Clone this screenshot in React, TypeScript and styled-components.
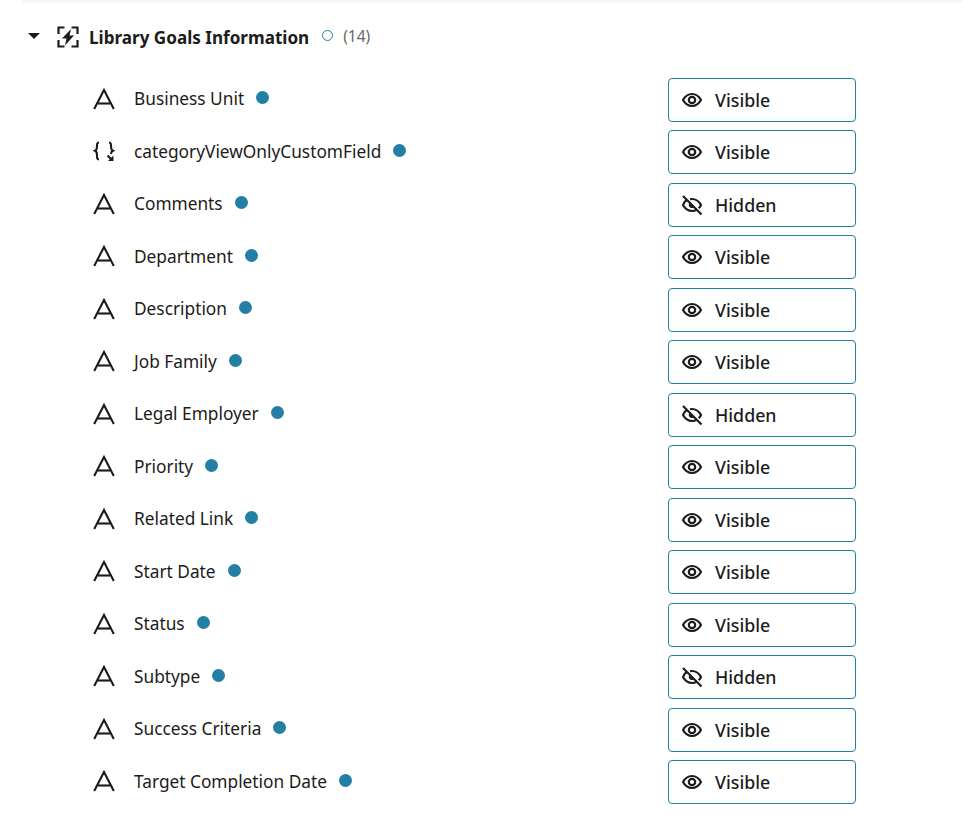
import React from 'react';
import styled, { createGlobalStyle } from 'styled-components';

const GlobalStyle = createGlobalStyle`
    html, body {
        margin: 0;
        padding: 0;
        background: #fff;
        font-family: "Noto Sans", "Liberation Sans", sans-serif;
        color: #1d1b19;
    }
`;

const Page = styled.div`
    width: 962px;
    height: 816px;
    overflow: hidden;
`;

const TopShade = styled.div`
    height: 3px;
    margin-left: 22px;
    background: linear-gradient(#f3f3f3, #fafafa);
`;

const Header = styled.div`
    display: flex;
    align-items: center;
    height: 66px;
    padding-left: 28px;
`;

const Caret = styled.span`
    width: 0;
    height: 0;
    margin: 0 17px 0 0;
    border-left: 6px solid transparent;
    border-right: 6px solid transparent;
    border-top: 6px solid #1d1b19;
`;

const GroupGlyph = styled.svg`
    margin-top: 2px;
`;

const Title = styled.h2`
    margin: 3px 0 0 10px;
    font-size: 17.1px;
    font-weight: 700;
    line-height: 24px;
`;

const Ring = styled.span`
    width: 11px;
    height: 11px;
    margin: -1px 0 0 13px;
    box-sizing: border-box;
    border: 1.5px solid #237fa3;
    border-radius: 50%;
`;

const Count = styled.span`
    margin: -1px 0 0 10px;
    font-size: 15.5px;
    color: #6b6560;
`;

const Rows = styled.ul`
    list-style: none;
    margin: 4.7px 0 0;
    padding: 0 0 0 92px;
`;

const Row = styled.li`
    display: flex;
    align-items: center;
    width: 764px;
    height: 52.5px;
`;

const TypeIcon = styled.span`
    display: flex;
    justify-content: center;
    width: 24px;
    margin: -2px 18px 0 0;
`;

const Label = styled.span`
    margin-top: -1px;
    font-size: 17.3px;
    line-height: 24px;
    white-space: nowrap;
`;

const Dot = styled.span`
    width: 13px;
    height: 13px;
    margin: -4px 0 0 12px;
    border-radius: 50%;
    background: #237fa3;
`;

const VisibilityButton = styled.button`
    display: flex;
    align-items: center;
    gap: 12px;
    width: 188px;
    height: 44px;
    margin-left: auto;
    padding: 0 0 0 12px;
    box-sizing: border-box;
    background: #fff;
    border: 1px solid #237fa3;
    border-radius: 4px;
    font-family: inherit;
    font-size: 17.8px;
    font-weight: 500;
    color: #1d1b19;
`;

const ButtonIcon = styled.span`
    display: flex;
    justify-content: center;
    width: 22px;
`;

const TextIcon = () => (
    <svg width="22" height="22" viewBox="0 0 22 22" fill="none" stroke="#1d1b19" strokeWidth="2.1">
        <path d="M1.200 21 L11 2 L20.800 21" />
        <path d="M5 15.500 H17" />
    </svg>
);

const FormulaIcon = () => (
    <svg width="22" height="22" viewBox="0 0 22 22" fill="none" stroke="#1d1b19" strokeWidth="2.1">
        <path d="M6 2.500 C3.800 2.500 4 4.500 4 6.500 C4 9 3.800 10 2 10.800 C3.800 11.600 4 12.600 4 15 C4 17.500 3.800 19.500 6 19.500" />
        <path d="M16 2.500 C18.200 2.500 18 4.500 18 6.500 C18 9 18.200 10 20 10.800 C18.200 11.600 18 12.600 18 14" />
        <path d="M14.500 15.500 L18.500 19.500" />
        <path d="M20.500 15.500 V21 H15 Z" fill="#1d1b19" stroke="none" />
    </svg>
);

const GroupIcon = () => (
    <GroupGlyph width="22" height="22" viewBox="0 0 22 22" fill="none" stroke="#1d1b19" strokeWidth="2.2">
        <path d="M7.500 1.500 H1.500 V8" />
        <path d="M14.500 1.500 H20.500 V8" />
        <path d="M1.500 14 V20.500 H7.500" />
        <path d="M20.500 14 V20.500 H14.500" />
        <path d="M14 3 L5 12.500 H9.500 L8 19.500 L17 9.500 H12.500 Z" fill="#1d1b19" stroke="none" />
    </GroupGlyph>
);

const EyeIcon = () => (
    <svg width="20" height="20" viewBox="0 0 20 20" fill="none" stroke="#1d1b19" strokeWidth="2.2">
        <path d="M1 10 C3.500 5.500 6.500 4 10 4 C13.500 4 16.500 5.500 19 10 C16.500 14.500 13.500 16 10 16 C6.500 16 3.500 14.500 1 10 Z" />
        <circle cx="10" cy="10" r="3.200" />
    </svg>
);

const EyeOffIcon = () => (
    <svg width="22" height="22" viewBox="0 0 22 22" fill="none" stroke="#1d1b19" strokeWidth="2.2">
        <path d="M6 6 C3.800 7 2.600 9 2 11 C4.500 15.500 7.500 17 11 17 C12.800 17 14.200 16.600 15.600 15.600" />
        <path d="M9 5.200 C9.600 5 10.300 5 11 5 C14.500 5 17.500 6.500 20 11 C19.300 12.300 18.600 13.300 17.700 14.200" />
        <path d="M8.200 9.200 C7 11.500 8.500 14 11 14 C11.800 14 12.500 13.800 13 13.400 Z" fill="#1d1b19" stroke="none" />
        <path d="M2 2 L20.500 20.500" />
    </svg>
);

type Field = { name: string; hidden?: boolean; formula?: boolean };

const fields: Field[] = [
    { name: 'Business Unit' },
    { name: 'categoryViewOnlyCustomField', formula: true },
    { name: 'Comments', hidden: true },
    { name: 'Department' },
    { name: 'Description' },
    { name: 'Job Family' },
    { name: 'Legal Employer', hidden: true },
    { name: 'Priority' },
    { name: 'Related Link' },
    { name: 'Start Date' },
    { name: 'Status' },
    { name: 'Subtype', hidden: true },
    { name: 'Success Criteria' },
    { name: 'Target Completion Date' },
];

export default function App() {
    return (
        <Page>
            <GlobalStyle />
            <TopShade />
            <Header>
                <Caret />
                <GroupIcon />
                <Title>Library Goals Information</Title>
                <Ring />
                <Count>(14)</Count>
            </Header>
            <Rows>
                {fields.map((field) => (
                    <Row key={field.name}>
                        <TypeIcon>{field.formula ? <FormulaIcon /> : <TextIcon />}</TypeIcon>
                        <Label>{field.name}</Label>
                        <Dot />
                        <VisibilityButton>
                            <ButtonIcon>{field.hidden ? <EyeOffIcon /> : <EyeIcon />}</ButtonIcon>
                            {field.hidden ? 'Hidden' : 'Visible'}
                        </VisibilityButton>
                    </Row>
                ))}
            </Rows>
        </Page>
    );
}
